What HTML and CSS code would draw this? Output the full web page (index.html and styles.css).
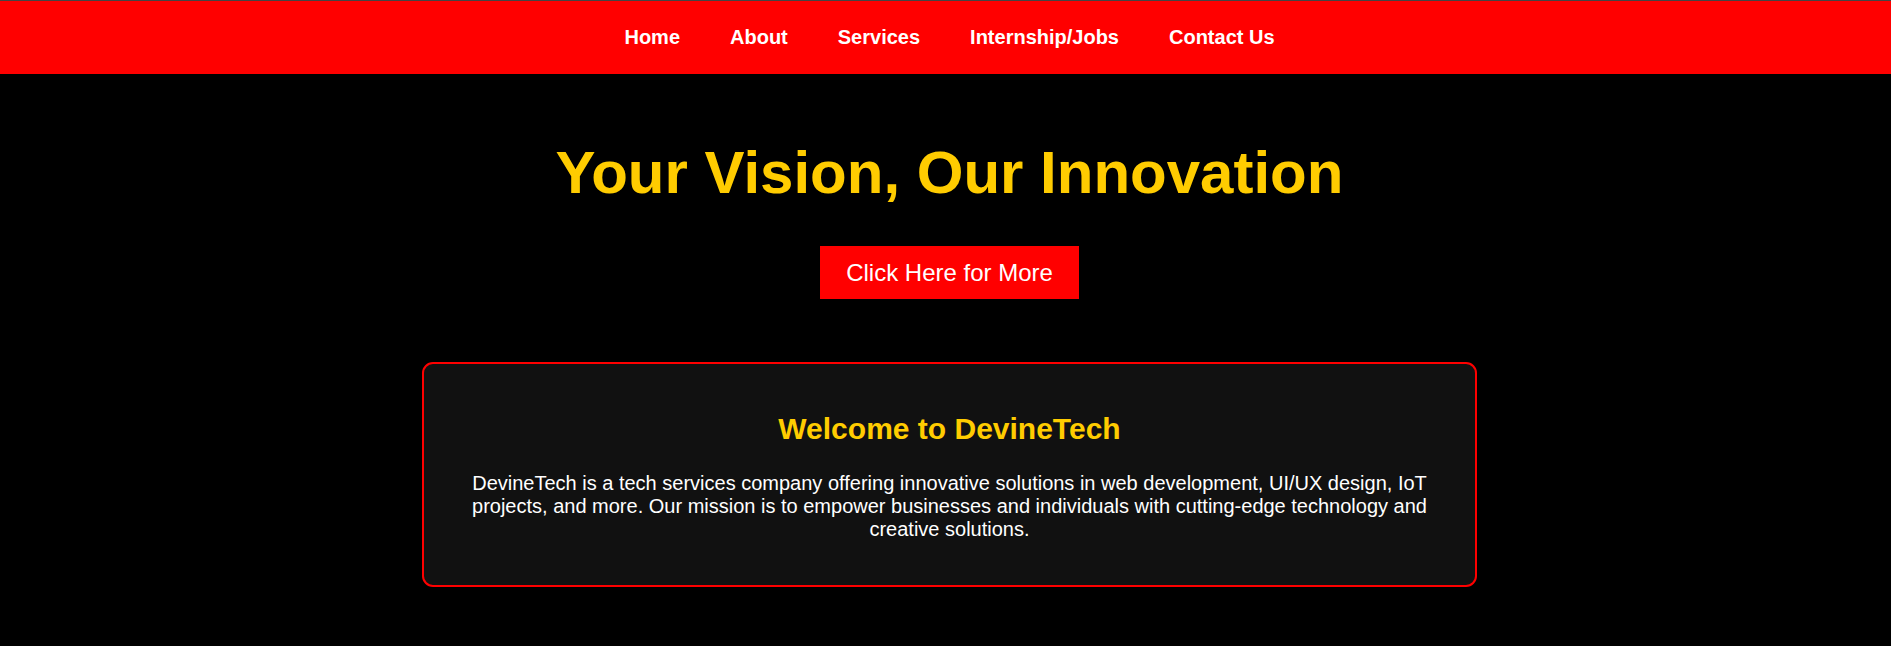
FILE: index.html
```html
<!DOCTYPE html>
<html lang="en">
<head>
<meta charset="utf-8">
<title>DevineTech</title>
<link rel="stylesheet" href="styles.css">
</head>
<body>
<header class="topbar">
  <nav class="menu">
    <a class="menu-link" href="#">Home</a>
    <a class="menu-link" href="#">About</a>
    <a class="menu-link" href="#">Services</a>
    <a class="menu-link" href="#">Internship/Jobs</a>
    <a class="menu-link" href="#">Contact Us</a>
  </nav>
</header>
<main class="content">
  <h1 class="hero-title">Your Vision, Our Innovation</h1>
  <a class="hero-btn" href="#">Click Here for More</a>
  <section class="card">
    <h2 class="card-title">Welcome to DevineTech</h2>
    <p class="card-text">DevineTech is a tech services company offering innovative solutions in web development, UI/UX design, IoT projects, and more. Our mission is to empower businesses and individuals with cutting-edge technology and creative solutions.</p>
  </section>
</main>
</body>
</html>
```

FILE: styles.css
```css
html, body {
  margin: 0;
  padding: 0;
  background: #000;
}
body {
  font-family: "Liberation Sans", Arial, sans-serif;
  color: #fff;
}
.topbar {
  border-top: 1px solid #444;
  background: #ff0000;
  height: 73px;
  display: flex;
  align-items: center;
  justify-content: center;
  padding-left: 8px;
}
.menu {
  display: flex;
  gap: 50px;
}
.menu-link {
  color: #fff;
  text-decoration: none;
  font-weight: bold;
  font-size: 20px;
}
.content {
  display: flex;
  flex-direction: column;
  align-items: center;
  text-align: center;
  padding-left: 8px;
}
.hero-title {
  margin: 64px 0 0;
  font-size: 60px;
  font-weight: bold;
  color: #ffcc00;
  line-height: 69px;
}
.hero-btn {
  margin-top: 39px;
  display: inline-block;
  background: #ff0000;
  color: #fff;
  text-decoration: none;
  font-size: 24px;
  line-height: 28px;
  padding: 12.5px 26px;
}
.card {
  margin-top: 63px;
  width: 1003px;
  padding: 24px;
  border: 2px solid #ff0000;
  border-radius: 11px;
  background: #111;
}
.card-title {
  margin: 24px 0 25px;
  font-size: 30px;
  line-height: 34.5px;
  font-weight: bold;
  color: #ffcc00;
}
.card-text {
  margin: 0 0 20px;
  font-size: 20px;
  line-height: 23px;
  color: #fff;
}
```
